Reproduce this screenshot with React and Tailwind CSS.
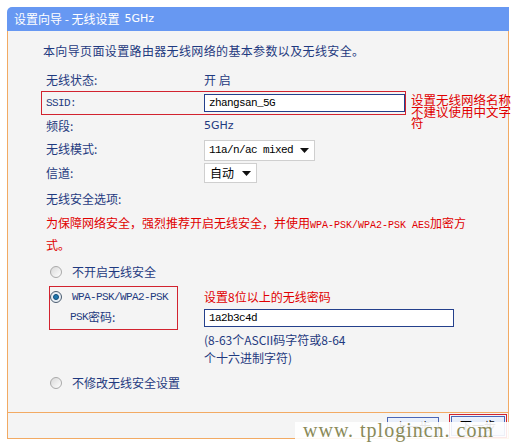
import React from "react";

const mono = "font-['Liberation_Mono',monospace] text-[11px] tracking-[-0.6px]";

function Radio({ checked }) {
  return (
    <div
      className={
        "w-[12px] h-[12px] rounded-full border flex items-center justify-center shrink-0 " +
        (checked
          ? "border-[#4b5d70] bg-[#e8eef4]"
          : "border-[#a9a9a9] bg-gradient-to-br from-[#d9d9d9] to-[#ffffff]")
      }
    >
      {checked && <div className="w-[6px] h-[6px] rounded-full bg-[#1f78b0] border border-[#0f4c78]" />}
    </div>
  );
}

function Arrow() {
  return (
    <svg width="9" height="5" viewBox="0 0 9 5" className="shrink-0">
      <path d="M0 0 H9 L4.5 5 Z" fill="#111" />
    </svg>
  );
}

function Row({ h, label, children }) {
  return (
    <div className={"flex items-center pl-[38px] " + h}>
      <div className="w-[158px] shrink-0">{label}</div>
      <div className="flex items-center">{children}</div>
    </div>
  );
}

export default function App() {
  return (
    <div className="w-[515px] h-[445px] bg-white relative overflow-hidden font-['Noto_Sans_CJK_SC',sans-serif] text-[12px] text-[#1f3a80]">
      <div className="ml-[7px] pt-[7px] w-[502px]">
        {/* header */}
        <div className="h-[24px] bg-[#6798f2] rounded-tl-[5px] flex items-center pl-[7px] text-white text-[12px] leading-[24px]">
          设置向导 - 无线设置 <span className="ml-[5px] font-['DejaVu_Sans',sans-serif] text-[11px]">5GHz</span>
        </div>

        {/* body */}
        <div className="h-[381px] border-x border-[#f2aa63] bg-[#f4f4f4] flex flex-col pt-[10px]">
          <div className="h-[20px] leading-[20px] pl-[35px] tracking-[0.36px]">
            本向导页面设置路由器无线网络的基本参数以及无线安全。
          </div>

          <div className="mt-[8px]">
            <Row h="h-[22px]" label="无线状态:">
              <span>开 启</span>
            </Row>
          </div>

          {/* SSID */}
          <div className="flex items-start h-[24px]">
            <div className="ml-[33px] w-[366px] h-[24px] border border-[#d2232f] flex items-center pl-[4px]">
              <div className={"w-[158px] shrink-0 " + mono}>SSID:</div>
              <div className="w-[201px] h-[18px] border border-[#24408c] bg-white flex items-center pl-[4px]">
                <span className={mono + " text-[#000]"}>zhangsan_5G</span>
              </div>
            </div>
            <div className="ml-[5px] mt-[3px] w-[104px] shrink-0 text-[12.5px] leading-[11.5px] text-[#e00000] whitespace-nowrap">
              <div>设置无线网络名称</div>
              <div>不建议使用中文字</div>
              <div>符</div>
            </div>
          </div>

          <Row h="h-[22px]" label="频段:">
            <span className="font-['DejaVu_Sans',sans-serif] text-[11px]">5GHz</span>
          </Row>

          <Row h="h-[24px]" label="无线模式:">
            <div className="w-[111px] h-[21px] mt-[3px] border border-[#cfcfcf] bg-white flex items-center justify-between pl-[4px] pr-[5px]">
              <span className={mono + " text-[#000]"}>11a/n/ac mixed</span>
              <Arrow />
            </div>
          </Row>

          <Row h="h-[24px]" label="信道:">
            <div className="w-[53px] h-[20px] border border-[#cfcfcf] bg-white flex items-center justify-between pl-[5px] pr-[5px] text-[#000]">
              <span>自动</span>
              <Arrow />
            </div>
          </Row>

          <div className="h-[28px] flex items-center pl-[38px]">无线安全选项:</div>

          <div className="pl-[38px] leading-[19px] text-[#e00000]">
            <div>
              为保障网络安全，强烈推荐开启无线安全，并使用<span className="font-['Liberation_Mono',monospace] text-[10px]">WPA-PSK/WPA2-PSK AES</span>加密方
            </div>
            <div>式。</div>
          </div>

          <div className="mt-[8px] h-[20px] flex items-center pl-[42px]">
            <Radio />
            <span className="ml-[10px]">不开启无线安全</span>
          </div>

          {/* WPA section */}
          <div className="mt-[4px] flex items-start">
            <div className="ml-[41px] w-[129px] border border-[#d2232f] pb-[2px] shrink-0">
              <div className="h-[20px] flex items-center">
                <Radio checked />
                <span className={"ml-[10px] " + mono}>WPA-PSK/WPA2-PSK</span>
              </div>
              <div className="h-[20px] flex items-center pl-[20px]">
                <span className={mono}>PSK</span>
                <span>密码:</span>
              </div>
            </div>
            <div className="ml-[26px] flex flex-col">
              <div className="h-[22px] flex items-center text-[#e00000]">设置8位以上的无线密码</div>
              <div className="mt-[1px] w-[250px] h-[18px] border border-[#24408c] bg-white flex items-center pl-[4px]">
                <span className={mono + " text-[#000]"}>1a2b3c4d</span>
              </div>
              <div className="mt-[4px] leading-[18px]">
                <div>(8-63个ASCII码字符或8-64</div>
                <div>个十六进制字符)</div>
              </div>
            </div>
          </div>

          <div className="mt-[6px] h-[20px] flex items-center pl-[42px]">
            <Radio />
            <span className="ml-[10px]">不修改无线安全设置</span>
          </div>
        </div>

        {/* footer */}
        <div className="h-[27px] border border-[#f2aa63] bg-[#f4f4f4] flex justify-end items-start pt-[1px] pr-[1px] overflow-hidden">
          <div className="mt-[3px] w-[52px] h-[20px] border border-[#4a66b8] bg-gradient-to-b from-[#eef3fc] to-[#c9d8f4] flex items-center justify-center text-[#000] text-[12px]">
            上一步
          </div>
          <div className="ml-[10px] border border-[#d2232f] p-[1px]">
            <div className="w-[54px] h-[20px] border border-[#4a66b8] bg-gradient-to-b from-[#eef3fc] to-[#c9d8f4] flex items-center justify-center text-[#000] text-[12px]">
              下一步
            </div>
          </div>
        </div>
      </div>

      {/* watermark */}
      <div className="absolute left-[295px] top-[422px] w-[220px] h-[23px] bg-white/90">
        <div className="absolute left-[8px] top-[-2px] leading-[20px] whitespace-nowrap font-['Liberation_Serif',serif] text-[20px] tracking-[1px] text-[#8a8a58]">
          www. tplogincn. com
        </div>
      </div>
    </div>
  );
}
